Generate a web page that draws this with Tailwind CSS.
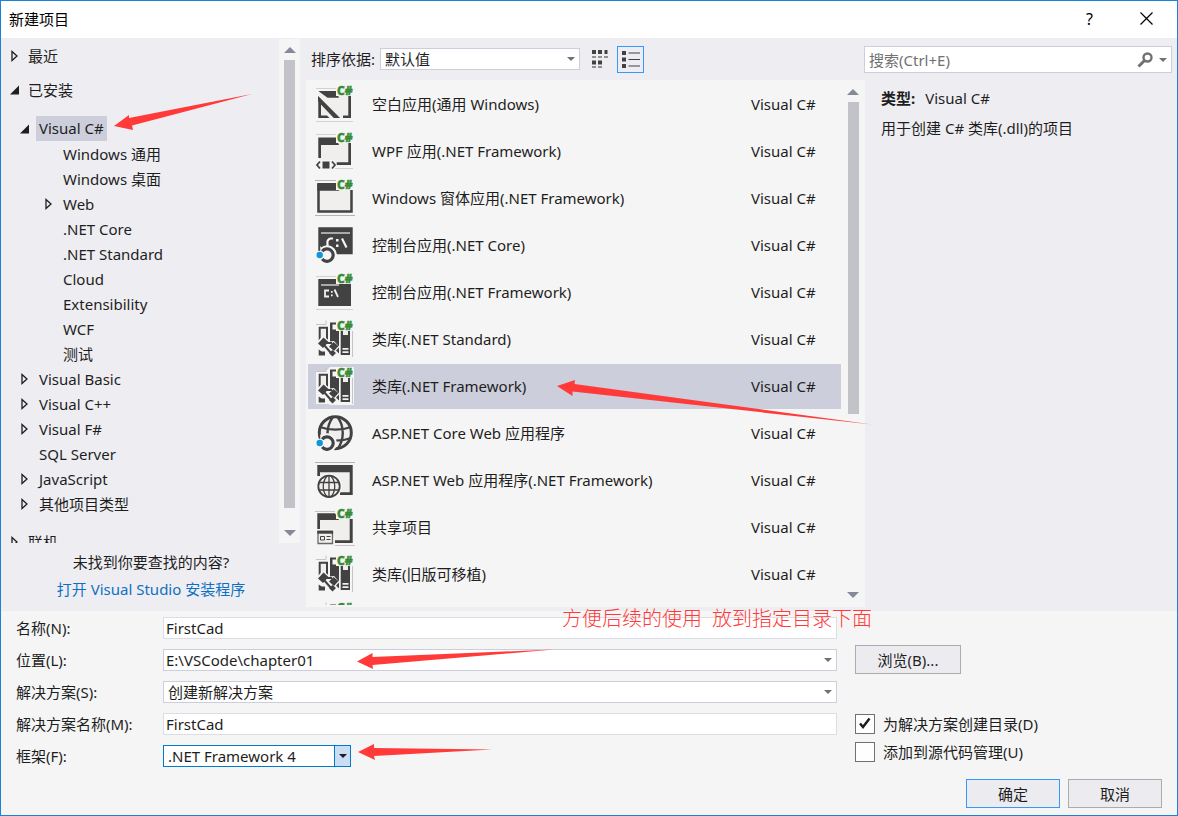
<!DOCTYPE html>
<html lang="zh-CN">
<head>
  <meta charset="UTF-8">
  <meta name="viewport" content="width=device-width, initial-scale=1.0">
  <title>新建项目</title>
  <script src="https://cdn.jsdelivr.net/npm/@tailwindcss/browser@4"></script>
</head>
<body class="font-['Noto_Sans','Noto_Sans_CJK_SC',sans-serif] text-[15px] leading-[22px] text-[#1e1e1e]">

  <!-- Icon sprites -->
  <svg class="hidden" aria-hidden="true">
    <symbol id="arrow-closed" viewBox="0 0 9 12"><path d="M2 1.5v9L7 6z" fill="none" stroke="#1e1e1e" stroke-width="1.3"/></symbol>
    <symbol id="arrow-open" viewBox="0 0 9 12"><path d="M9 1.5v9H0z" fill="#1e1e1e"/></symbol>
    <symbol id="drop" viewBox="0 0 8 4"><path d="M0 0h8L4 4z" fill="currentColor"/></symbol>
    <symbol id="scroll-up" viewBox="0 0 12 6"><path d="M6 0l6 6H0z" fill="#868999"/></symbol>
    <symbol id="scroll-down" viewBox="0 0 12 6"><path d="M0 0h12L6 6z" fill="#868999"/></symbol>

    <symbol id="cs-badge" viewBox="0 0 40 39">
      <path d="M21 0h18v9l-1 2H21z" fill="#f5f5f5"/>
      <text x="22" y="10" font-size="12" font-weight="800" fill="#388a34" stroke="#388a34" stroke-width=".5" font-family="Noto Sans">C#</text>
    </symbol>
    <symbol id="ic-blank" viewBox="0 0 40 39">
      <path d="M1 3.5h20M1 36.5h37" stroke="#d2d2d2"/>
      <path d="M4 6h32v27H4z" fill="#f0efee"/>
      <path d="M3.300 6H21l3 6.700H12.500z" fill="#424242"/>
      <path d="M33.300 11H36v22h-8v-2.500h5.300z" fill="#424242"/>
      <path d="M3.300 11.500L24.500 33h-5.500L6 19.500v11l6 0 2.500 2.500H3.300z" fill="#424242"/>
      <path d="M3 11l22 22h-6L3 16z" fill="#424242"/>
      <use href="#cs-badge"/>
    </symbol>
    <symbol id="ic-wpf" viewBox="0 0 40 39">
      <path d="M1 2.500h20M20 36.500h18" stroke="#d2d2d2"/>
      <path d="M4 6h32v26H4z" fill="#f0efee"/>
      <path d="M3.300 5.500H21l3 7.500H6v13H3.300z" fill="#424242"/>
      <path d="M33.300 11H36v22H21.700v-2.700h11.600z" fill="#424242"/>
      <path d="M0 28h20v10H0z" fill="#f5f5f5"/>
      <path d="M5 29.500L2 33l3 3.500M17 29.500l3 3.500-3 3.500" fill="none" stroke="#424242" stroke-width="1.800"/>
      <path d="M7.500 29.500h7v7h-7z" fill="#424242"/>
      <use href="#cs-badge"/>
    </symbol>
    <symbol id="ic-forms" viewBox="0 0 40 39">
      <path d="M0 1.500h22M0 36.500h40" stroke="#b4b4b4"/>
      <path d="M3.500 6h33v26.500h-33z" fill="#f0efee" stroke="#424242" stroke-width="2.500"/>
      <path d="M2.300 4h20l2 7.700h-22z" fill="#424242"/>
      <use href="#cs-badge"/>
    </symbol>
    <symbol id="core-ring" viewBox="0 0 40 39">
      <path d="M6 22.500a9 9 0 1 1 0 13M6 22l6 7-6 7z" fill="#f5f5f5" stroke="#f5f5f5" stroke-width="1.500"/>
      <path d="M7.200 25.200a6.200 6.200 0 1 1 0 7.800" fill="none" stroke="#424242" stroke-width="3.200"/>
      <circle cx="4.700" cy="29" r="4.200" fill="#f5f5f5"/>
      <circle cx="4.700" cy="29" r="3.200" fill="#1296db"/>
    </symbol>
    <symbol id="ic-console-core" viewBox="0 0 40 39">
      <path d="M3.300 1.300h34.400v27H3.300z" fill="#424242"/>
      <path d="M6 7h29" stroke="#f0efee" stroke-width="1.200"/>
      <path d="M18 12.500h-2.500a4 4 0 0 0-3 5v5M27 12.500l4.500 9" fill="none" stroke="#f5f5f5" stroke-width="2.200"/>
      <path d="M21 13h2.500v2.500H21zM21 18.500h2.500V21H21z" fill="#f5f5f5"/>
      <use href="#core-ring"/>
    </symbol>
    <symbol id="ic-console" viewBox="0 0 40 39">
      <path d="M1 3.500h20M1 36.500h37" stroke="#d2d2d2"/>
      <path d="M3.300 6H36v27H3.300z" fill="#424242"/>
      <path d="M6 12h18" stroke="#f0efee" stroke-width="1.200"/>
      <path d="M14 17.500h-4v6h4M19.500 16.500l3.500 7.500" fill="none" stroke="#f0efee" stroke-width="1.800"/>
      <path d="M16 18h1.700v1.700H16zM16 21.500h1.700v1.700H16z" fill="#f0efee"/>
      <use href="#cs-badge"/>
    </symbol>
    <symbol id="ic-lib" viewBox="0 0 40 39">
      <path d="M1 4h10l4-4h24v38H20l-4 0-3-1H1z" fill="#f5f5f5"/>
      <path d="M1 4.500h10v-4M37.500 11v26" fill="none" stroke="#c4c4c4"/>
      <path d="M4.700 7.700h7.300v12H4.700z" fill="#f0efee" stroke="#424242" stroke-width="2"/>
      <path d="M15 2.500h7v2h-4.500v5H24v24h-6l-3-3z" fill="#424242"/>
      <path d="M25.700 10H35v25h-9.300z" fill="#424242"/>
      <path d="M28 10h5v5h-5z" fill="#f0efee"/>
      <path d="M27.500 28h6v1.700h-6zM27.500 31.300h6V33h-6z" fill="#f0efee"/>
      <path d="M2 22L8 15.500l7 6 4-.5 5.500 6-3.500 3.500 3 3-4 4-5-2-3-5-9-3z" fill="#f5f5f5"/>
      <path d="M8.500 17.500l5 4.500-5.500 6-5-4.500zM18.500 22l5 4-4.500 5-5-4.500z" fill="#424242"/>
      <path d="M9 23h8M9 25l7 8" stroke="#424242" stroke-width="2"/>
      <path d="M17.500 30l3.500 3-3.500 3.500-3.500-3.500zM3.700 29.500l3 2h3.300v4H3.700z" fill="#424242"/>
      <use href="#cs-badge"/>
    </symbol>
    <symbol id="ic-web-core" viewBox="0 0 40 39">
      <circle cx="20.300" cy="18.700" r="16" fill="#f0efee" stroke="#424242" stroke-width="3"/>
      <path d="M5 13c9 3.500 22 3.500 31 0M5 24c9 3.500 22 3.500 31 0M18 3C11 12 11 26 16 34M22.500 3c7 9 7 23 0 32" fill="none" stroke="#424242" stroke-width="2.400"/>
      <use href="#core-ring"/>
    </symbol>
    <symbol id="ic-web" viewBox="0 0 40 39">
      <path d="M0 1.500h40" stroke="#b4b4b4"/>
      <path d="M3.500 5h33v28h-33z" fill="#f0efee"/>
      <path d="M2.300 4h35.400v30H25v-2.800h9.700V11.300H5V15H2.300z" fill="#424242"/>
      <circle cx="14" cy="25.300" r="13" fill="#f5f5f5"/>
      <circle cx="14" cy="25.300" r="10.700" fill="#f0efee" stroke="#424242" stroke-width="1.800"/>
      <path d="M4 21.500h20M4 29h20M14 14.500v21.500M12 15c-5 6-5 15 0 21M16 15c5 6 5 15 0 21" fill="none" stroke="#424242" stroke-width="1.300"/>
    </symbol>
    <symbol id="ic-shared" viewBox="0 0 40 39">
      <path d="M0 3.500h20M20 37.500h20" stroke="#c4c4c4"/>
      <path d="M3.500 6h33v28h-33z" fill="#f0efee"/>
      <path d="M2.300 5.300H20l4 6.700H5v9H2.300z" fill="#424242"/>
      <path d="M34.700 11h3v24H20v-2.800h14.700z" fill="#424242"/>
      <path d="M0 21h19.500v17H0z" fill="#f5f5f5"/>
      <path d="M3 23.500h14.500v12H3z" fill="#f0efee" stroke="#6a6a6a" stroke-width="1.300"/>
      <path d="M2.300 22.700h15.800v3H2.300z" fill="#424242"/>
      <path d="M5.500 28.500h4v3.500h-4zM11.500 28.500h4M11.500 31.500h4" fill="none" stroke="#424242"/>
      <use href="#cs-badge"/>
    </symbol>
  </svg>

  <div class="relative flex h-screen flex-col overflow-hidden border border-[#1883d7] bg-[#f5f5f5]">

    <!-- Title bar -->
    <header class="flex h-[37px] shrink-0 items-center justify-between bg-white pb-[2px] pl-2 pr-[2px] text-black">
      <h1>新建项目</h1>
      <div class="flex h-full items-center">
        <button class="h-full w-[57px] text-base" aria-label="帮助">?</button>
        <button class="flex h-full w-[57px] items-center justify-center" aria-label="关闭">
          <svg class="size-[13px]" viewBox="0 0 13 13"><path d="M.5.5l12 12M12.500.5l-12 12" stroke="#000" stroke-width="1.200"/></svg>
        </button>
      </div>
    </header>

    <main class="flex min-h-0 flex-1 bg-[#eeeef2]">

      <!-- Template categories -->
      <aside class="flex w-[305px] shrink-0 flex-col">
        <div class="flex min-h-0 flex-1">
          <ul class="min-w-0 flex-1 overflow-hidden pt-px">
            <li class="flex h-[34px] items-center gap-[9px] pl-[9px]"><svg class="h-3 w-[9px]"><use href="#arrow-closed"/></svg>最近</li>
            <li class="flex h-[34px] items-center gap-[9px] pl-[9px]"><svg class="h-3 w-[9px]"><use href="#arrow-open"/></svg>已安装</li>
            <li class="mt-[9px] flex h-[25px] items-center gap-[7px] pl-[19px]"><svg class="h-3 w-[9px]"><use href="#arrow-open"/></svg><span class="bg-[#cccedb] px-[3px] leading-[25px]">Visual C#</span></li>
            <li class="flex h-[25px] items-center pl-[62px]">Windows 通用</li>
            <li class="flex h-[25px] items-center pl-[62px]">Windows 桌面</li>
            <li class="flex h-[25px] items-center gap-[10px] pl-[43px]"><svg class="h-3 w-[9px]"><use href="#arrow-closed"/></svg>Web</li>
            <li class="flex h-[25px] items-center pl-[62px]">.NET Core</li>
            <li class="flex h-[25px] items-center pl-[62px]">.NET Standard</li>
            <li class="flex h-[25px] items-center pl-[62px]">Cloud</li>
            <li class="flex h-[25px] items-center pl-[62px]">Extensibility</li>
            <li class="flex h-[25px] items-center pl-[62px]">WCF</li>
            <li class="flex h-[25px] items-center pl-[62px]">测试</li>
            <li class="flex h-[25px] items-center gap-[10px] pl-[19px]"><svg class="h-3 w-[9px]"><use href="#arrow-closed"/></svg>Visual Basic</li>
            <li class="flex h-[25px] items-center gap-[10px] pl-[19px]"><svg class="h-3 w-[9px]"><use href="#arrow-closed"/></svg>Visual C++</li>
            <li class="flex h-[25px] items-center gap-[10px] pl-[19px]"><svg class="h-3 w-[9px]"><use href="#arrow-closed"/></svg>Visual F#</li>
            <li class="flex h-[25px] items-center pl-[38px]">SQL Server</li>
            <li class="flex h-[25px] items-center gap-[10px] pl-[19px]"><svg class="h-3 w-[9px]"><use href="#arrow-closed"/></svg>JavaScript</li>
            <li class="flex h-[25px] items-center gap-[10px] pl-[19px]"><svg class="h-3 w-[9px]"><use href="#arrow-closed"/></svg>其他项目类型</li>
            <li class="mt-[9px] flex h-[34px] items-center gap-[9px] pl-[9px]"><svg class="h-3 w-[9px]"><use href="#arrow-closed"/></svg>联机</li>
          </ul>
          <div class="mr-[6px] mt-px flex w-[21px] flex-col items-center bg-[#f5f5f5] pb-[7px] pt-2">
            <svg class="h-[6px] w-3 shrink-0"><use href="#scroll-up"/></svg>
            <div class="mb-[22px] mt-[7px] w-[11px] flex-1 bg-[#c2c3c9]"></div>
            <svg class="h-[6px] w-3 shrink-0"><use href="#scroll-down"/></svg>
          </div>
        </div>
        <div class="pb-2 pr-[5px] pt-[6px] text-center leading-[27px]">
          <p>未找到你要查找的内容?</p>
          <a href="#" class="text-[#0e70c0]">打开 Visual Studio 安装程序</a>
        </div>
      </aside>

      <!-- Template list -->
      <section class="flex min-w-0 flex-1 flex-col pb-1">
        <div class="flex h-[42px] shrink-0 items-center pl-[5px]">
          <label for="sort" class="w-[69px] whitespace-nowrap">排序依据:</label>
          <div class="relative w-[200px]">
            <select id="sort" class="block h-[22px] w-full appearance-none border border-[#cccedb] bg-white pl-1 leading-5"><option>默认值</option></select>
            <svg class="pointer-events-none absolute right-[5px] top-[9px] h-1 w-2 text-[#717171]"><use href="#drop"/></svg>
          </div>
          <button class="ml-[6px] flex size-[27px] items-center justify-center" aria-label="中等图标">
            <svg class="h-[18px] w-4" viewBox="0 0 16 18">
              <path d="M0 0h4v4H0zM6 0h4v4H6zM12.500 0h3v4h-3zM0 10.500h4v4H0zM6 10.500h4v4H6z" fill="#424242"/>
              <path d="M0 7h4M6 7h4M12 7h4M0 17h4M6 17h4" stroke="#717171" stroke-width="1.500"/>
            </svg>
          </button>
          <button class="ml-1 flex size-[27px] items-center justify-center border border-[#3399ff]" aria-label="小图标">
            <svg class="h-[17px] w-[18px]" viewBox="0 0 18 17">
              <path d="M0 0h4v4H0zM0 6.500h4v4H0zM0 13h4v4H0z" fill="#424242"/>
              <path d="M6.500 2H18M6.500 8.500H18M6.500 15H18" stroke="#424242" stroke-width="1.200"/>
            </svg>
          </button>
        </div>
        <div class="flex min-h-0 flex-1 bg-[#f5f5f5] py-[2px] pl-[2px]">
          <ul class="flex min-w-0 flex-1 flex-col gap-[2px] overflow-hidden">
            <li class="flex h-[45px] shrink-0 items-center pl-[7px]"><svg class="h-[39px] w-10"><use href="#ic-blank"/></svg><span class="flex-1 pb-[2px] pl-[17px]">空白应用(通用 Windows)</span><span class="w-[90px] pb-[2px]">Visual C#</span></li>
            <li class="flex h-[45px] shrink-0 items-center pl-[7px]"><svg class="h-[39px] w-10"><use href="#ic-wpf"/></svg><span class="flex-1 pb-[2px] pl-[17px]">WPF 应用(.NET Framework)</span><span class="w-[90px] pb-[2px]">Visual C#</span></li>
            <li class="flex h-[45px] shrink-0 items-center pl-[7px]"><svg class="h-[39px] w-10"><use href="#ic-forms"/></svg><span class="flex-1 pb-[2px] pl-[17px]">Windows 窗体应用(.NET Framework)</span><span class="w-[90px] pb-[2px]">Visual C#</span></li>
            <li class="flex h-[45px] shrink-0 items-center pl-[7px]"><svg class="h-[39px] w-10"><use href="#ic-console-core"/></svg><span class="flex-1 pb-[2px] pl-[17px]">控制台应用(.NET Core)</span><span class="w-[90px] pb-[2px]">Visual C#</span></li>
            <li class="flex h-[45px] shrink-0 items-center pl-[7px]"><svg class="h-[39px] w-10"><use href="#ic-console"/></svg><span class="flex-1 pb-[2px] pl-[17px]">控制台应用(.NET Framework)</span><span class="w-[90px] pb-[2px]">Visual C#</span></li>
            <li class="flex h-[45px] shrink-0 items-center pl-[7px]"><svg class="h-[39px] w-10"><use href="#ic-lib"/></svg><span class="flex-1 pb-[2px] pl-[17px]">类库(.NET Standard)</span><span class="w-[90px] pb-[2px]">Visual C#</span></li>
            <li class="flex h-[45px] shrink-0 items-center bg-[#cccedb] pl-[7px]"><svg class="h-[39px] w-10"><use href="#ic-lib"/></svg><span class="flex-1 pb-[2px] pl-[17px]">类库(.NET Framework)</span><span class="w-[90px] pb-[2px]">Visual C#</span></li>
            <li class="flex h-[45px] shrink-0 items-center pl-[7px]"><svg class="h-[39px] w-10"><use href="#ic-web-core"/></svg><span class="flex-1 pb-[2px] pl-[17px]">ASP.NET Core Web 应用程序</span><span class="w-[90px] pb-[2px]">Visual C#</span></li>
            <li class="flex h-[45px] shrink-0 items-center pl-[7px]"><svg class="h-[39px] w-10"><use href="#ic-web"/></svg><span class="flex-1 pb-[2px] pl-[17px]">ASP.NET Web 应用程序(.NET Framework)</span><span class="w-[90px] pb-[2px]">Visual C#</span></li>
            <li class="flex h-[45px] shrink-0 items-center pl-[7px]"><svg class="h-[39px] w-10"><use href="#ic-shared"/></svg><span class="flex-1 pb-[2px] pl-[17px]">共享项目</span><span class="w-[90px] pb-[2px]">Visual C#</span></li>
            <li class="flex h-[45px] shrink-0 items-center pl-[7px]"><svg class="h-[39px] w-10"><use href="#ic-lib"/></svg><span class="flex-1 pb-[2px] pl-[17px]">类库(旧版可移植)</span><span class="w-[90px] pb-[2px]">Visual C#</span></li>
            <li class="flex h-[45px] shrink-0 items-center pl-[7px]"><svg class="h-[39px] w-10"><use href="#ic-lib"/></svg></li>
          </ul>
          <div class="flex w-6 flex-col items-center pb-[7px] pt-[7px]">
            <svg class="h-[6px] w-3 shrink-0"><use href="#scroll-up"/></svg>
            <div class="mb-[178px] mt-[7px] w-[11px] flex-1 bg-[#c2c3c9]"></div>
            <svg class="h-[6px] w-3 shrink-0"><use href="#scroll-down"/></svg>
          </div>
        </div>
      </section>

      <!-- Search and template details -->
      <aside class="w-[312px] shrink-0 pr-[5px] pt-2">
        <div class="-ml-px flex h-[27px] items-center border border-[#cccedb] bg-white pl-1 pr-1">
          <input type="search" aria-label="搜索" placeholder="搜索(Ctrl+E)" class="min-w-0 flex-1 outline-none placeholder:text-[#717171]">
          <svg class="size-4" viewBox="0 0 16 16" fill="none" stroke="#717171"><circle cx="10.500" cy="5.500" r="4" stroke-width="2.400"/><path d="M7.500 8.500L1.500 14.500" stroke-width="3"/></svg>
          <svg class="ml-[6px] h-1 w-2 text-[#717171]"><use href="#drop"/></svg>
        </div>
        <dl class="flex gap-[10px] pl-4 pt-[14px]">
          <dt class="font-bold">类型:</dt>
          <dd>Visual C#</dd>
        </dl>
        <p class="pl-4 pt-2">用于创建 C# 类库(.dll)的项目</p>
      </aside>
    </main>

    <!-- Project settings -->
    <form class="shrink-0 pt-px">
      <div class="flex">
        <div class="grid min-w-0 flex-1 auto-rows-[32px] grid-cols-[147px_1fr] items-center pl-[15px]">
          <label for="name">名称(N):</label>
          <input id="name" type="text" value="FirstCad" class="h-[22px] border border-[#dcdde6] bg-white px-[2px]">

          <label for="location">位置(L):</label>
          <div class="relative">
            <input id="location" type="text" value="E:\VSCode\chapter01" class="block h-[22px] w-full border border-[#cccedb] bg-white px-[2px]">
            <svg class="pointer-events-none absolute right-[5px] top-[9px] h-1 w-2 text-[#717171]"><use href="#drop"/></svg>
          </div>

          <label for="solution">解决方案(S):</label>
          <div class="relative">
            <select id="solution" class="block h-[22px] w-full appearance-none border border-[#cccedb] bg-white pl-1 leading-5"><option>创建新解决方案</option></select>
            <svg class="pointer-events-none absolute right-[5px] top-[9px] h-1 w-2 text-[#717171]"><use href="#drop"/></svg>
          </div>

          <label for="solution-name">解决方案名称(M):</label>
          <input id="solution-name" type="text" value="FirstCad" class="h-[22px] border border-[#dcdde6] bg-white px-[2px]">

          <label for="framework">框架(F):</label>
          <div class="relative w-[188px]">
            <select id="framework" class="block h-[22px] w-full appearance-none border border-[#007acc] bg-white pl-1 leading-5"><option>.NET Framework 4</option></select>
            <span class="pointer-events-none absolute inset-y-0 right-0 flex w-[17px] items-center justify-center border border-[#007acc] bg-[#c9def5]"><svg class="h-1 w-2 text-[#1e1e1e]"><use href="#drop"/></svg></span>
          </div>
        </div>

        <div class="flex w-[340px] shrink-0 flex-col pl-[18px] pt-[33px]">
          <button type="button" class="h-[29px] w-[106px] border border-[#acacac] bg-[#ececf0]">浏览(B)...</button>
          <label class="mt-9 flex h-7 items-center gap-2">
            <span class="relative size-5">
              <input type="checkbox" checked class="peer block size-5 appearance-none border border-[#717171] bg-[#fefefe]">
              <svg class="pointer-events-none absolute left-1 top-[3px] hidden size-3 peer-checked:block" viewBox="0 0 12 12"><path d="M1 6.500l3 3.500L10.500 1.500" fill="none" stroke="#1e1e1e" stroke-width="2.500"/></svg>
            </span>
            为解决方案创建目录(D)
          </label>
          <label class="flex h-7 items-center gap-2">
            <input type="checkbox" class="size-5 appearance-none border border-[#717171] bg-[#fefefe]">
            添加到源代码管理(U)
          </label>
        </div>
      </div>
      <div class="flex justify-end gap-2 pb-[7px] pr-[15px] pt-[7px]">
        <button type="submit" class="h-[29px] w-[94px] border border-[#3399ff] bg-[#ececf0]">确定</button>
        <button type="button" class="h-[29px] w-[94px] border border-[#acacac] bg-[#ececf0]">取消</button>
      </div>
    </form>

    <!-- Annotations drawn over the dialog -->
    <svg class="pointer-events-none absolute -left-px -top-px h-[816px] w-[1178px]" viewBox="0 0 1178 816" fill="#ff3a38">
      <path d="M114 126l15-11v3L252 94l-120 31.500 1 4.500z"/>
      <path d="M557 386l18-6-.5 4L872 424.500 572.500 391.500v4.500z"/>
      <path d="M357 661.500l15.500-8.500v4l181-7.500-181 15.500.5 4z"/>
      <path d="M358 752l16-8v4l118 1.500-118 6.500 1 4z"/>
    </svg>
    <p class="pointer-events-none absolute left-[561px] top-[606px] whitespace-pre font-['Liberation_Serif','Noto_Sans_CJK_SC',serif] text-xl leading-6 font-light text-[#ff3a38]">方便后续的使用  放到指定目录下面</p>
  </div>
</body>
</html>
